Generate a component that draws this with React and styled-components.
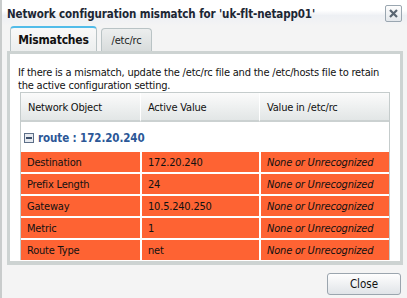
import React from "react";
import styled, { createGlobalStyle } from "styled-components";

const GlobalStyle = createGlobalStyle`
  html, body { margin: 0; padding: 0; }
  body {
    font-family: "DejaVu Sans Condensed", "DejaVu Sans", sans-serif;
    font-size: 11px;
    letter-spacing: -0.2px;
    color: #000;
    background: #f4f4f4;
  }
`;

const Dialog = styled.div`
  width: 407px;
  height: 298px;
  box-sizing: border-box;
  border-left: 2px solid #c9cccc;
  background: #f4f4f4;
  display: flex;
  flex-direction: column;
`;

const TitleBar = styled.div`
  height: 26px;
  box-sizing: border-box;
  padding: 5px 5px 0 5px;
  display: flex;
  justify-content: space-between;
  align-items: flex-start;
  background: linear-gradient(#ffffff 0%, #ffffff 40%, #eef0f4 60%, #f4f4f4 100%);
`;

const Title = styled.div`
  font-weight: bold;
  font-size: 11.5px;
  letter-spacing: -0.1px;
  color: #1c2633;
  padding-top: 2px;
`;

const CloseX = styled.button`
  width: 17px;
  height: 17px;
  padding: 0;
  border: 1px solid #9aa6b0;
  border-radius: 2px;
  background: linear-gradient(#fdfdfd, #e4e8ec);
  display: flex;
  align-items: center;
  justify-content: center;
`;

const TabStrip = styled.div`
  height: 25px;
  padding-left: 8px;
  display: flex;
  align-items: flex-end;
  gap: 4px;
`;

const Tab = styled.div`
  box-sizing: border-box;
  width: ${(p) => (p.$active ? "87px" : "51px")};
  height: ${(p) => (p.$active ? "25px" : "23px")};
  border: 1px solid #b9c3c5;
  border-bottom: none;
  border-top: ${(p) => (p.$active ? "2px solid #52bce9" : "1px solid #b9c3c5")};
  border-radius: 4px 4px 0 0;
  background: ${(p) =>
    p.$active
      ? "linear-gradient(#f9f9f9, #eceeee)"
      : "linear-gradient(#eceeee, #d8dcdc)"};
  font-weight: ${(p) => (p.$active ? "bold" : "normal")};
  font-size: ${(p) => (p.$active ? "12px" : "11px")};
  color: ${(p) => (p.$active ? "#111" : "#222")};
  display: flex;
  align-items: center;
  justify-content: center;
`;

const Panel = styled.div`
  box-sizing: border-box;
  height: 214px;
  margin: 0 4px 0 5px;
  border: 3px solid #cdd3d2;
  border-bottom-width: 4px;
  background: #fff;
  padding: 12px 8px 0 8px;
  display: flex;
  flex-direction: column;
  overflow: hidden;
`;

const Intro = styled.p`
  margin: 0;
  line-height: 13px;
  color: #111;
`;

const Grid = styled.table`
  margin-left: 2px;
  width: 370px;
  table-layout: fixed;
  border-collapse: separate;
  border-spacing: 0;
  border: 1px solid #c5cccc;
  border-bottom: none;
`;

const HeadCell = styled.th`
  height: 29px;
  padding: 2px 0 0 7px;
  box-sizing: border-box;
  text-align: left;
  font-weight: normal;
  color: #111;
  background: linear-gradient(#fbfbfb, #e2e6e6);
  border-bottom: 2px solid #cbd1d1;
  border-left: ${(p) => (p.$first ? "none" : "1px solid #fff")};
`;

const GroupCell = styled.td`
  height: 28px;
  box-sizing: border-box;
  padding: 0 0 4px 3px;
  vertical-align: bottom;
  background: #fff;
  font-weight: bold;
  color: #2b5797;
  font-size: 11.5px;
  letter-spacing: -0.1px;
`;

const GroupLabel = styled.span`
  display: inline-flex;
  align-items: center;
  gap: 4px;
`;

const Cell = styled.td`
  height: 20px;
  padding: 0 0 0 6px;
  background: #fe6333;
  border-top: 2px solid #fff;
  border-left: ${(p) => (p.$first ? "none" : "2px solid #fff")};
  font-style: ${(p) => (p.$missing ? "italic" : "normal")};
  color: #111;
  white-space: nowrap;
`;

const Footer = styled.div`
  flex: 1;
  display: flex;
  justify-content: flex-end;
  align-items: flex-start;
  padding: 8px 6px 0 0;
`;

const Button = styled.button`
  width: 74px;
  height: 22px;
  border: 1px solid #9ba5ae;
  border-radius: 3px;
  background: linear-gradient(#fefefe, #e0e4e8);
  font-family: "DejaVu Sans Condensed", "DejaVu Sans", sans-serif;
  font-size: 11.5px;
  color: #111;
`;

const CollapseIcon = () => (
  <svg width="10" height="10" viewBox="0 0 10 10">
    <rect x="0.5" y="0.5" width="9" height="9" fill="#e6eaf0" stroke="#5d6f88" />
    <rect x="2" y="4" width="6" height="2" fill="#3b4e6a" />
  </svg>
);

const CrossIcon = () => (
  <svg width="9" height="9" viewBox="0 0 9 9">
    <path d="M1 1 L8 8 M8 1 L1 8" stroke="#5a6672" strokeWidth="2.2" />
  </svg>
);

const rows = [
  ["Destination", "172.20.240"],
  ["Prefix Length", "24"],
  ["Gateway", "10.5.240.250"],
  ["Metric", "1"],
  ["Route Type", "net"],
];

export default function App() {
  return (
    <>
      <GlobalStyle />
      <Dialog>
        <TitleBar>
          <Title>Network configuration mismatch for 'uk-flt-netapp01'</Title>
          <CloseX aria-label="Close">
            <CrossIcon />
          </CloseX>
        </TitleBar>
        <TabStrip>
          <Tab $active>Mismatches</Tab>
          <Tab>/etc/rc</Tab>
        </TabStrip>
        <Panel>
          <Intro>
            If there is a mismatch, update the /etc/rc file and the /etc/hosts file to retain
            the active configuration setting.
          </Intro>
          <Grid>
            <colgroup>
              <col style={{ width: 119 }} />
              <col style={{ width: 119 }} />
              <col style={{ width: 130 }} />
            </colgroup>
            <thead>
              <tr>
                <HeadCell $first>Network Object</HeadCell>
                <HeadCell>Active Value</HeadCell>
                <HeadCell>Value in /etc/rc</HeadCell>
              </tr>
            </thead>
            <tbody>
              <tr>
                <GroupCell colSpan={3}>
                  <GroupLabel>
                    <CollapseIcon />
                    route : 172.20.240
                  </GroupLabel>
                </GroupCell>
              </tr>
              {rows.map(([name, value]) => (
                <tr key={name}>
                  <Cell $first>{name}</Cell>
                  <Cell>{value}</Cell>
                  <Cell $missing>None or Unrecognized</Cell>
                </tr>
              ))}
            </tbody>
          </Grid>
        </Panel>
        <Footer>
          <Button>Close</Button>
        </Footer>
      </Dialog>
    </>
  );
}
